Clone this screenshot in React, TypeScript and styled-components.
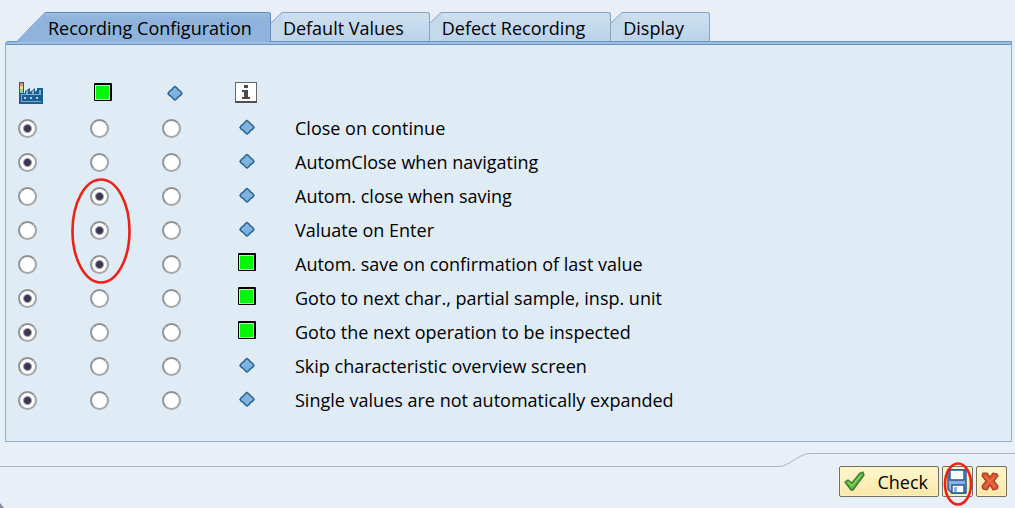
import React, { useState } from 'react';
import styled, { createGlobalStyle } from 'styled-components';

const GlobalStyle = createGlobalStyle`
  *, *::before, *::after { box-sizing: border-box; }
  body {
    margin: 0;
    background: #e8eff6;
    color: #000;
    font: 18px/24px "Open Sans", "Noto Sans", sans-serif;
  }
  button, input { font: inherit; color: inherit; }
`;

const Page = styled.main`
  position: relative;
  min-height: 100vh;
  padding-top: 12px;
  display: flex;
  flex-direction: column;
`;

const TabShell = styled.section`
  margin: 0 3px 0 5px;
`;

const TabList = styled.div`
  display: flex;
  height: 30px;
  margin-bottom: -1px;
  padding-left: 12px;
`;

const TabButton = styled.button<{ $active: boolean }>`
  display: flex;
  position: relative;
  z-index: ${p => (p.$active ? 1 : 0)};
  height: ${p => (p.$active ? 30 : 29)}px;
  padding: 0;
  border: 0;
  background: none;
  cursor: pointer;
`;

const TabLabel = styled.span<{ $active: boolean }>`
  height: 100%;
  padding: 3px ${p => (p.$active ? 18 : 25)}px 0 ${p => (p.$active ? 2 : 0)}px;
  border-top: 1px solid ${p => (p.$active ? '#5f8cba' : '#87a3bf')};
  border-right: 1px solid ${p => (p.$active ? '#5f8cba' : '#87a3bf')};
  border-top-right-radius: 3px;
  background: ${p =>
    p.$active
      ? 'linear-gradient(#a0c0e3, #8fb3dc 5px, #8fb3dc)'
      : 'linear-gradient(#cfe0ef, #b9d2ea)'};
  white-space: nowrap;
`;

const Slope = styled.svg`
  display: block;
  flex: none;
`;

const TabRule = styled.div`
  height: 4px;
  border: 1px solid #6a93bd;
  border-radius: 3px 0 0 0;
  background: #9dbfe0;
`;

const Panel = styled.div`
  padding: 27px 12px 24px;
  border: 1px solid #94afcc;
  border-top: 0;
  background: #dfebf5;
`;

const SettingsTable = styled.table`
  border-collapse: collapse;
`;

const HeadCell = styled.th`
  width: 72px;
  height: 39px;
  padding: 2px 0 0;
  text-align: left;
`;

const Cell = styled.td`
  position: relative;
  height: 34px;
  padding: 0;
`;

const StateCell = styled(Cell)`
  padding-bottom: 2px;
`;

const LabelCell = styled.th`
  padding: 0;
  font-weight: 400;
  text-align: left;
  white-space: nowrap;
`;

const IconHead = styled(HeadCell)`
  width: 61px;
`;

const Radio = styled.input`
  appearance: none;
  display: block;
  width: 19px;
  height: 19px;
  margin: 0;
  border: 2px solid #9a9a9a;
  border-color: #8f8f8f #a3a3a3 #a8a8a8 #949494;
  border-radius: 50%;
  background: #fff;
  &:checked {
    background: radial-gradient(circle, #34344c 0, #3b3b55 3px, #fff 5px);
  }
`;

const Icon = styled.svg`
  display: block;
`;

const RadioMark = styled.svg`
  position: absolute;
  top: -35px;
  left: -20px;
  width: 62px;
  height: 106px;
  pointer-events: none;
`;

const Footer = styled.footer`
  margin-top: 11px;
`;

const FooterRule = styled.div`
  display: flex;
  height: 14px;
`;

const LowLine = styled.div`
  flex: 1;
  border-bottom: 1px solid #a6b5c6;
`;

const HighLine = styled.div`
  width: 202px;
  border-top: 1px solid #a6b5c6;
`;

const Actions = styled.div`
  display: flex;
  justify-content: flex-end;
  gap: 3px;
  margin-top: -1px;
  padding: 0 8px 11px 0;
`;

const ActionButton = styled.button`
  position: relative;
  display: flex;
  align-items: center;
  gap: 12px;
  height: 31px;
  padding: 0 4px;
  border: 1px solid #76705f;
  border-radius: 2px;
  background: linear-gradient(#fdf6cf, #fbe8a6);
  box-shadow: inset 0 0 0 1px #fdf3c4;
  cursor: pointer;
`;

const CheckButton = styled(ActionButton)`
  padding-right: 10px;
`;

const SaveMark = styled.svg`
  position: absolute;
  top: -5px;
  left: 0;
  width: 30px;
  height: 44px;
  pointer-events: none;
`;

const Grip = styled.svg`
  position: absolute;
  left: 0;
  bottom: 0;
`;

function FactoryIcon() {
  return (
    <Icon width="26" height="22" viewBox="0 0 26 22" role="img" aria-label="Plant setting">
      <path d="M1 0h5v11h1V9l5-3v4l5-4v4l2-2V6h6v16H1z" fill="#1c5f8f" />
      <path d="M2 1h3v3H2z" fill="#e88a80" />
      <path d="M2 4h3v3H2z" fill="#f0df85" />
      <path d="M2 7h3v4H2z" fill="#8fd0a0" />
      <path d="M3 12h20v1H3zM3 19h20v1H3zM3 13h1v7H3zM8 9l2-1v4H8zM14 9l2-1v4h-2zM21 8h2v4h-2z" fill="#78afd8" />
      <path d="M6 15h2v2H6zM12 15h2v2h-2zM18 15h2v2h-2z" fill="#a6d2ee" />
    </Icon>
  );
}

function GreenIcon() {
  return (
    <Icon width="26" height="22" viewBox="0 0 26 22" role="img" aria-label="On">
      <rect x="4" y="1" width="18" height="18" rx="1" fill="#000" />
      <rect x="5" y="3" width="15" height="15" fill="#b8f5b0" />
      <rect x="6" y="4" width="13" height="13" fill="#00f808" />
    </Icon>
  );
}

function DiamondIcon() {
  return (
    <Icon width="26" height="22" viewBox="0 0 26 22" role="img" aria-label="Off">
      <path
        d="M13 4.5l2 1.500 1.500 2 2 1.200 1.500 2.300-1.500 2-2 1-1.500 2-2 1.500-2-1.500-1.500-2-2-1-1.500-2 1.500-2.300 2-1.200 1.500-2z"
        fill="#7fb2df"
        stroke="#28648f"
        strokeWidth="1.5"
      />
    </Icon>
  );
}

function InfoIcon() {
  return (
    <Icon width="26" height="22" viewBox="0 0 26 22" role="img" aria-label="Current value">
      <rect x="1.5" y="0.5" width="21" height="19" fill="#fff" stroke="#666" />
      <path d="M1 20h22" stroke="#505050" strokeWidth="2" />
      <path d="M10 3h4v3h-4zM8 8h6v7h2v2H8v-2h2v-5H8z" fill="#4b4b4b" />
    </Icon>
  );
}

function CheckIcon() {
  return (
    <Icon width="21" height="21" viewBox="0 0 21 21" aria-hidden="true">
      <path
        d="M1 11l3-2 4 3 8-10 3-1 1 3L9 19H7z"
        fill="#55b83a"
        stroke="#46753c"
        strokeWidth="1.3"
        strokeLinejoin="round"
      />
      <path d="M4 11l4 4 9-11" fill="none" stroke="#83d45f" strokeWidth="1.3" />
    </Icon>
  );
}

function SaveIcon() {
  return (
    <Icon width="21" height="25" viewBox="0 0 21 25" aria-hidden="true">
      <path d="M1 1h18v23H5l-4-4z" fill="#8db1e0" stroke="#20598c" strokeWidth="1.4" />
      <path d="M3 1h14v10H3z" fill="#fff" stroke="#20598c" strokeWidth="1.4" />
      <path d="M5 16h12v8H5z" fill="#fff" stroke="#20598c" strokeWidth="1.4" />
      <path d="M7 18h3v5H7z" fill="#8db1e0" />
    </Icon>
  );
}

function CancelIcon() {
  return (
    <Icon width="21" height="21" viewBox="0 0 21 21" aria-hidden="true">
      <path
        d="M2 2h4l3 4 3-4 4 1 1 2-4 5 4 5-1 3-4 1-3-5-3 5-4-1-1-3 4-5-4-5z"
        fill="#dc5530"
        stroke="#9c3d25"
        strokeWidth="1.2"
        strokeLinejoin="round"
      />
      <path d="M4 5l10 11M14 5L4 16" stroke="#ea7149" strokeWidth="1.2" />
    </Icon>
  );
}

const tabs = ['Recording Configuration', 'Default Values', 'Defect Recording', 'Display'];
const choices = ['Plant setting', 'On', 'Off'];

const settings = [
  { label: 'Close on continue', choice: 0, on: false },
  { label: 'AutomClose when navigating', choice: 0, on: false },
  { label: 'Autom. close when saving', choice: 1, on: false },
  { label: 'Valuate on Enter', choice: 1, on: false, marked: true },
  { label: 'Autom. save on confirmation of last value', choice: 1, on: true },
  { label: 'Goto to next char., partial sample, insp. unit', choice: 0, on: true },
  { label: 'Goto the next operation to be inspected', choice: 0, on: true },
  { label: 'Skip characteristic overview screen', choice: 0, on: false },
  { label: 'Single values are not automatically expanded', choice: 0, on: false },
];

function Tab({ label, active, onSelect }: { label: string; active: boolean; onSelect: () => void }) {
  return (
    <TabButton type="button" role="tab" aria-selected={active} $active={active} onClick={onSelect}>
      {active ? (
        <Slope width="29" height="30" viewBox="0 0 29 30" aria-hidden="true">
          <path d="M0 30L29 .5V30z" fill="#8fb3dc" />
          <path d="M0 29.5L28 .5h1" fill="none" stroke="#5f8cba" />
        </Slope>
      ) : (
        <Slope width="12" height="29" viewBox="0 0 12 29" aria-hidden="true">
          <path d="M0 11L11 .5h1V29H0z" fill="#c4d9ec" />
          <path d="M0 11L11 .5h1" fill="none" stroke="#87a3bf" />
        </Slope>
      )}
      <TabLabel $active={active}>{label}</TabLabel>
    </TabButton>
  );
}

export default function App() {
  const [tab, setTab] = useState(0);
  const [values, setValues] = useState(settings.map(s => s.choice));

  return (
    <>
      <GlobalStyle />
      <Page>
        <TabShell>
          <TabList role="tablist">
            {tabs.map((label, i) => (
              <Tab key={label} label={label} active={i === tab} onSelect={() => setTab(i)} />
            ))}
          </TabList>
          <TabRule />
          <Panel role="tabpanel" aria-label={tabs[tab]}>
            <SettingsTable>
              <thead>
                <tr>
                  <HeadCell><FactoryIcon /></HeadCell>
                  <HeadCell><GreenIcon /></HeadCell>
                  <HeadCell><DiamondIcon /></HeadCell>
                  <IconHead><InfoIcon /></IconHead>
                  <td />
                </tr>
              </thead>
              <tbody>
                {settings.map((s, row) => (
                  <tr key={s.label}>
                    {choices.map((name, col) => (
                      <Cell key={name}>
                        <Radio
                          type="radio"
                          name={`setting-${row}`}
                          aria-label={`${s.label}: ${name}`}
                          checked={values[row] === col}
                          onChange={() => setValues(values.map((v, i) => (i === row ? col : v)))}
                        />
                        {s.marked && col === 1 && (
                          <RadioMark viewBox="0 0 62 106" aria-hidden="true">
                            <ellipse cx="31" cy="53" rx="28.5" ry="51.5" fill="none" stroke="#ec2218" strokeWidth="2.6" />
                          </RadioMark>
                        )}
                      </Cell>
                    ))}
                    <StateCell>{s.on ? <GreenIcon /> : <DiamondIcon />}</StateCell>
                    <LabelCell scope="row">{s.label}</LabelCell>
                  </tr>
                ))}
              </tbody>
            </SettingsTable>
          </Panel>
        </TabShell>
        <Footer>
          <FooterRule>
            <LowLine />
            <Slope width="34" height="14" viewBox="0 0 34 14" aria-hidden="true">
              <path d="M0 13.5C10 13.5 20 .5 31 .5h3" fill="none" stroke="#a6b5c6" />
            </Slope>
            <HighLine />
          </FooterRule>
          <Actions>
            <CheckButton type="button">
              <CheckIcon />
              Check
            </CheckButton>
            <ActionButton type="button" aria-label="Save">
              <SaveIcon />
              <SaveMark viewBox="0 0 30 44" aria-hidden="true">
                <ellipse cx="15" cy="22" rx="13" ry="20.5" fill="none" stroke="#ec2218" strokeWidth="2.6" />
              </SaveMark>
            </ActionButton>
            <ActionButton type="button" aria-label="Cancel">
              <CancelIcon />
            </ActionButton>
          </Actions>
        </Footer>
        <Grip width="4" height="5" viewBox="0 0 4 5" aria-hidden="true">
          <path d="M0 0l4 5H0z" fill="#8c8aa8" />
        </Grip>
      </Page>
    </>
  );
}
